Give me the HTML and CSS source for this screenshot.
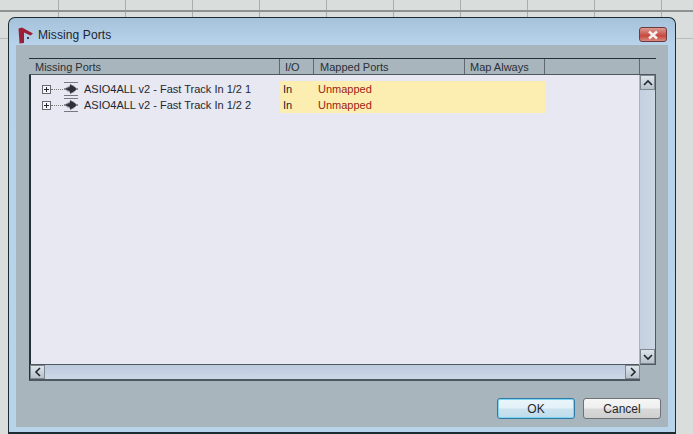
FILE: index.html
```html
<!DOCTYPE html>
<html lang="en">
<head>
<meta charset="UTF-8">
<meta name="viewport" content="width=device-width, initial-scale=1.0">
<title>Missing Ports</title>
<link rel="stylesheet" href="styles.css">
</head>
<body>
<div class="desktop">
  <div class="window">
    <div class="titlebar">
      <svg class="app-icon" width="16" height="17" viewBox="0 0 16 17">
        <path d="M0.5 1.5 L4 0.5 L15 6.5 L12.5 8.5 L6 5.5 L6 16 L1.5 16.5 Z" fill="#9c1f36"/>
        <rect x="9" y="10" width="2" height="2" fill="#3b3f4a"/>
      </svg>
      <span class="title">Missing Ports</span>
      <button class="close">
        <svg width="14" height="10" viewBox="0 0 14 10">
          <path d="M3 1.5 L11 8.5 M11 1.5 L3 8.5" stroke="#f4f1ee" stroke-width="2.6" fill="none"/>
        </svg>
      </button>
    </div>
    <div class="client">
      <div class="list">
        <div class="header">
          <div class="col col-name head-name">Missing Ports</div>
          <div class="col col-io">I/O</div>
          <div class="col col-mapped head-mapped">Mapped Ports</div>
          <div class="col col-always">Map Always</div>
          <div class="col col-rest"></div>
          <div class="col col-corner"></div>
        </div>
        <div class="list-middle">
          <div class="rows">
            <div class="row">
              <div class="col-name cell-name">
                <span class="expander"></span>
                <span class="dots"></span>
                <svg class="wave" width="16" height="16" viewBox="0 0 16 16">
                  <path d="M1 1.5 H15 M1 14.5 H15" stroke="#77797c" fill="none"/>
                  <path d="M1 7.5 H15 V8.5 H1 Z" fill="#2c2f36"/>
                  <path d="M3 6 L4 8 L5 5 L6 7 L7 4 L8 3 L9 5 L10 4 L11 6 L12 5.5 L13 8 L12 10.5 L11 10 L10 12 L9 11 L8 13 L7 12 L6 9 L5 11 L4 8 L3 10 Z" fill="#2c2f36"/>
                </svg>
                <span class="port">ASIO4ALL v2 - Fast Track In 1/2 1</span>
              </div>
              <div class="col-io cell-mark">In</div>
              <div class="col-mapped cell-mark unmapped">Unmapped</div>
              <div class="col-always cell-mark"></div>
            </div>
            <div class="row">
              <div class="col-name cell-name">
                <span class="expander"></span>
                <span class="dots"></span>
                <svg class="wave" width="16" height="16" viewBox="0 0 16 16">
                  <path d="M1 1.5 H15 M1 14.5 H15" stroke="#77797c" fill="none"/>
                  <path d="M1 7.5 H15 V8.5 H1 Z" fill="#2c2f36"/>
                  <path d="M3 6 L4 8 L5 5 L6 7 L7 4 L8 3 L9 5 L10 4 L11 6 L12 5.5 L13 8 L12 10.5 L11 10 L10 12 L9 11 L8 13 L7 12 L6 9 L5 11 L4 8 L3 10 Z" fill="#2c2f36"/>
                </svg>
                <span class="port">ASIO4ALL v2 - Fast Track In 1/2 2</span>
              </div>
              <div class="col-io cell-mark">In</div>
              <div class="col-mapped cell-mark unmapped">Unmapped</div>
              <div class="col-always cell-mark"></div>
            </div>
          </div>
          <div class="vscroll">
            <div class="arrow-btn">
              <svg width="10" height="8" viewBox="0 0 10 8"><path d="M1 6 L5 2 L9 6" stroke="#1f2630" stroke-width="1.6" fill="none"/></svg>
            </div>
            <div class="track"></div>
            <div class="arrow-btn">
              <svg width="10" height="8" viewBox="0 0 10 8"><path d="M1 2 L5 6 L9 2" stroke="#1f2630" stroke-width="1.6" fill="none"/></svg>
            </div>
          </div>
        </div>
        <div class="hscroll">
          <div class="arrow-btn arrow-h">
            <svg width="8" height="10" viewBox="0 0 8 10"><path d="M6 1 L2 5 L6 9" stroke="#1f2630" stroke-width="1.6" fill="none"/></svg>
          </div>
          <div class="track-h"></div>
          <div class="arrow-btn arrow-h">
            <svg width="8" height="10" viewBox="0 0 8 10"><path d="M2 1 L6 5 L2 9" stroke="#1f2630" stroke-width="1.6" fill="none"/></svg>
          </div>
        </div>
      </div>
      <div class="buttons">
        <button class="btn btn-default">OK</button>
        <button class="btn">Cancel</button>
      </div>
    </div>
  </div>
</div>
</body>
</html>
```

FILE: styles.css
```css
html, body {
  margin: 0;
  padding: 0;
}
body {
  font-family: "Liberation Sans", Arial, sans-serif;
  font-size: 11px;
  color: #23272e;
}
.desktop {
  width: 693px;
  height: 434px;
  overflow: hidden;
  padding: 17px 17px 0 8px;
  box-sizing: border-box;
  background-color: #d9dddb;
  background-image:
    linear-gradient(to bottom, transparent 10px, #8d9292 10px, #8d9292 12px, transparent 12px),
    linear-gradient(to bottom, transparent 38px, #b9bdbc 38px, #b9bdbc 39px, transparent 39px),
    repeating-linear-gradient(to right, transparent 0, transparent 58px, #a9adad 58px, #a9adad 59px, transparent 59px, transparent 67px);
  background-size: 100% 100%, 100% 100%, 100% 18px;
  background-repeat: no-repeat;
}
.window {
  height: 417px;
  box-sizing: border-box;
  border: 1px solid #1d2b33;
  border-bottom-width: 2px;
  border-radius: 7px 7px 0 0;
  padding: 0 7px 5px;
  background: linear-gradient(to bottom, #a6c2da 0, #b7d3ec 26px, #b7d4ea 100%);
  display: flex;
  flex-direction: column;
}
.titlebar {
  height: 27px;
  flex: none;
  display: flex;
  align-items: center;
  position: relative;
}
.app-icon {
  margin-left: 2px;
  margin-right: 4px;
  margin-top: 7px;
}
.title {
  font-size: 12px;
  letter-spacing: 0.1px;
  color: #1a2430;
  margin-top: 6px;
}
.close {
  position: absolute;
  top: 9px;
  right: 1px;
  width: 28px;
  height: 15px;
  padding: 0;
  border: 1px solid #6e3a3e;
  border-radius: 3px;
  background: linear-gradient(to bottom, #dc9a92 0, #c9574f 50%, #c8463c 60%, #d98a80 100%);
  display: flex;
  align-items: center;
  justify-content: center;
}
.client {
  flex: 1;
  background-color: #a9b5bc;
  padding: 13px 12px 0 13px;
  display: flex;
  flex-direction: column;
}
.list {
  width: 627px;
  display: flex;
  flex-direction: column;
}
.header {
  height: 17px;
  box-sizing: border-box;
  display: flex;
  background-color: #a9b5bc;
  border-top: 1px solid #25303a;
  border-bottom: 1px solid #4d5860;
  margin-left: 0;
}
.col {
  box-sizing: border-box;
  padding-left: 5px;
  line-height: 17px;
  border-right: 1px solid #5d6870;
  color: #2a2f36;
  flex: none;
}
.head-name {
  padding-left: 6px;
}
.head-mapped {
  padding-left: 6px;
}
.col-name {
  width: 251px;
  flex: none;
  box-sizing: border-box;
}
.col-io {
  width: 34px;
  flex: none;
  box-sizing: border-box;
}
.col-mapped {
  width: 151px;
  flex: none;
  box-sizing: border-box;
}
.col-always {
  width: 80px;
  flex: none;
  box-sizing: border-box;
}
.col-rest {
  width: 95px;
}
.col-corner {
  width: 16px;
  border-right: none;
}
.list-middle {
  height: 290px;
  display: flex;
}
.rows {
  width: 610px;
  box-sizing: border-box;
  background-color: #e7e8f2;
  border-left: 2px solid #25303a;
  border-bottom: 1px solid #4d5860;
  padding-top: 6px;
  margin-right: 1px;
}
.row {
  height: 16px;
  display: flex;
}
.cell-name {
  width: 249px;
  display: flex;
  align-items: center;
  padding-left: 11px;
  color: #23272e;
}
.expander {
  width: 7px;
  height: 7px;
  border: 1px solid #666a70;
  background:
    linear-gradient(#23272e, #23272e) center / 5px 1px no-repeat,
    linear-gradient(#23272e, #23272e) center / 1px 5px no-repeat,
    #f6f6fa;
  flex: none;
}
.dots {
  width: 12px;
  border-top: 1px dotted #777;
  flex: none;
}
.wave {
  flex: none;
  margin-right: 5px;
}
.port {
  white-space: nowrap;
}
.cell-mark {
  background-color: #fbeeb0;
  padding-left: 3px;
  line-height: 16px;
}
.col-mapped.cell-mark {
  padding-left: 4px;
}
.unmapped {
  color: #9f1c12;
}
.vscroll {
  width: 16px;
  box-sizing: border-box;
  border-right: 1px solid #4d5860;
  border-bottom: 1px solid #4d5860;
  display: flex;
  flex-direction: column;
  background: linear-gradient(to right, #c4d0e0, #cdd7e4);
}
.track {
  flex: 1;
}
.arrow-btn {
  height: 15px;
  flex: none;
  box-sizing: border-box;
  border: 1px solid #7d8890;
  background: linear-gradient(to bottom, #dfe5ea, #b7c1ca);
  display: flex;
  align-items: center;
  justify-content: center;
}
.hscroll {
  width: 611px;
  height: 16px;
  box-sizing: border-box;
  display: flex;
  border-left: 1px solid #25303a;
  border-bottom: 2px solid #4d5860;
  background: linear-gradient(to bottom, #bccade, #cdd7e6);
}
.track-h {
  flex: 1;
}
.arrow-h {
  width: 15px;
  height: 14px;
}
.buttons {
  display: flex;
  justify-content: flex-end;
  gap: 8px;
  margin-top: 17px;
  margin-right: -5px;
}
.btn {
  width: 78px;
  height: 21px;
  padding: 0;
  border: 1px solid #6d7276;
  border-radius: 3px;
  background: linear-gradient(to bottom, #f6f6f6 0, #efefef 45%, #d9d9d9 55%, #cfcfcf 100%);
  font-family: "Liberation Sans", Arial, sans-serif;
  font-size: 12px;
  color: #23272e;
}
.btn-default {
  border: 1px solid #2f7ba6;
  box-shadow: inset 0 0 0 1px #7fd4f2;
  background: linear-gradient(to bottom, #eaf6fb 0, #e3f1f8 45%, #cbe3ef 55%, #bfdcea 100%);
}
```
